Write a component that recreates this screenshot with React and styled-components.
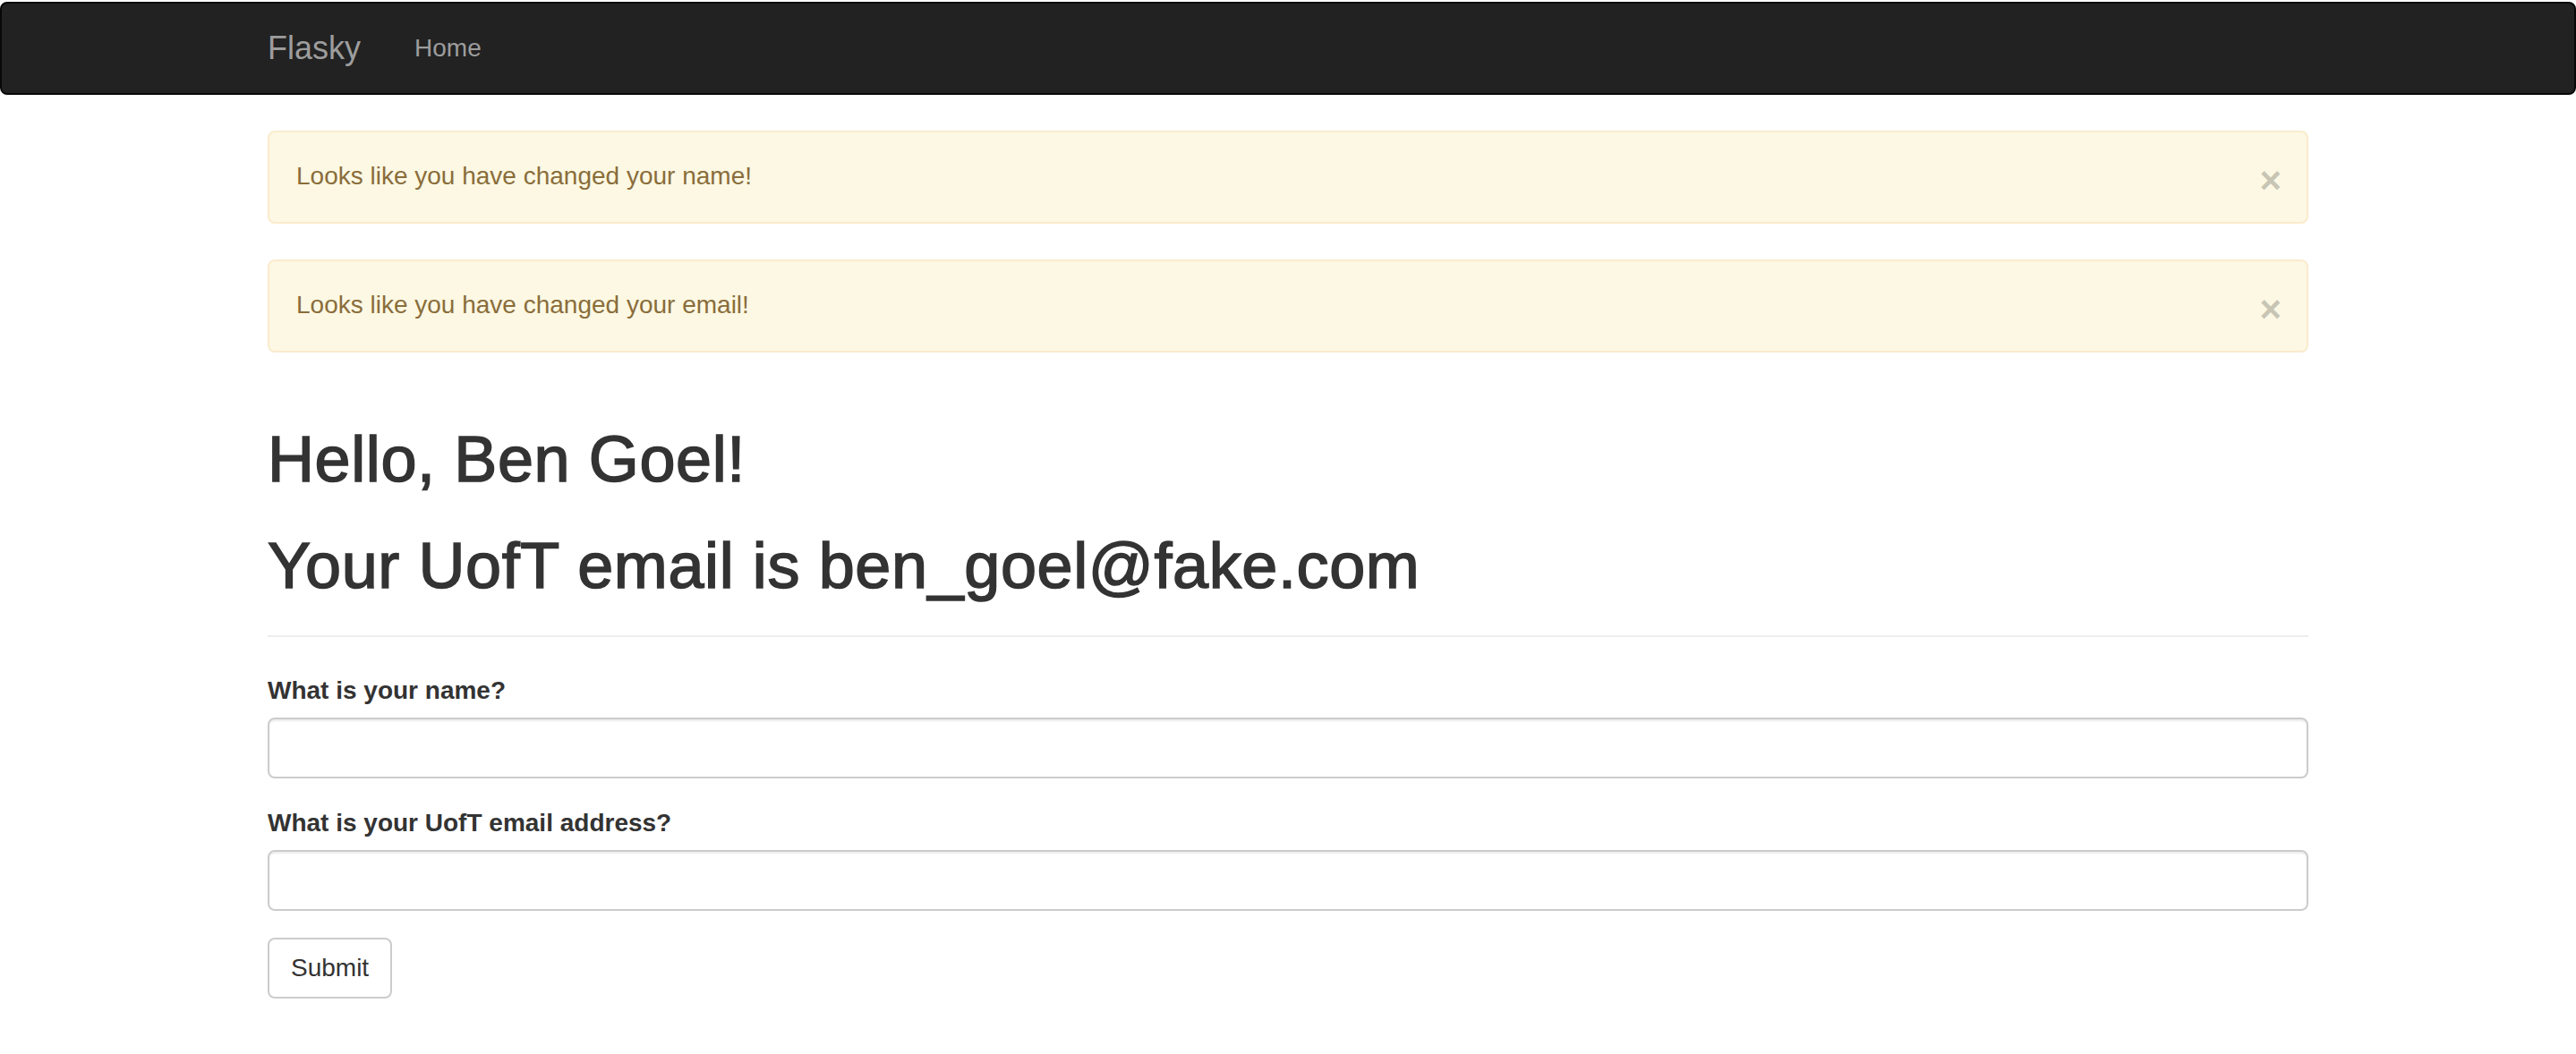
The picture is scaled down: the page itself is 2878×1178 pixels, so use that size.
import React from "react";
import styled, { createGlobalStyle } from "styled-components";

const Global = createGlobalStyle`
  * { box-sizing: border-box; }
  html, body { margin: 0; padding: 0; background: #fff; }
  body {
    font-family: "Liberation Sans", Arial, Helvetica, sans-serif;
    font-size: 28px;
    line-height: 40px;
    color: #333;
  }
`;

const Navbar = styled.nav`
  margin-top: 2px;
  min-height: 100px;
  background: #222;
  border: 2px solid #080808;
  border-radius: 8px;
  margin-bottom: 40px;
`;

const Container = styled.div`
  width: 2340px;
  margin: 0 auto;
  padding: 0 30px;
`;

const NavInner = styled.div`
  display: flex;
  align-items: center;
`;

const Brand = styled.a`
  display: block;
  height: 100px;
  padding: 30px;
  margin-left: -30px;
  font-size: 36px;
  line-height: 40px;
  color: #9d9d9d;
  text-decoration: none;
`;

const NavLink = styled.a`
  display: block;
  padding: 30px;
  font-size: 28px;
  line-height: 40px;
  color: #9d9d9d;
  text-decoration: none;
`;

const Alert = styled.div`
  padding: 29px 70px 29px 30px;
  margin-bottom: 40px;
  border: 2px solid #faebcc;
  border-radius: 8px;
  background: #fcf8e3;
  color: #8a6d3b;
  &::after { content: ""; display: table; clear: both; }
`;

const Close = styled.button`
  float: right;
  position: relative;
  top: 4px;
  right: -42px;
  padding: 0;
  border: 0;
  background: transparent;
  font-family: "Liberation Sans", Arial, sans-serif;
  font-size: 42px;
  font-weight: bold;
  line-height: 1;
  color: #000;
  opacity: 0.2;
  text-shadow: 0 2px 0 #fff;
  cursor: pointer;
`;

const PageHeader = styled.div`
  margin: 80px 0 40px;
  padding-bottom: 18px;
  border-bottom: 2px solid #eee;
`;

const Heading = styled.h1`
  font-size: 72px;
  line-height: 1.1;
  font-weight: 500;
  letter-spacing: 0.6px;
  margin: 40px 0 20px;
  color: #333;
  -webkit-text-stroke: 1.6px #333;
  &:first-child { margin-top: 0; }
`;

const Form = styled.form`
  display: flex;
  flex-direction: column;
  align-items: flex-start;
`;

const FormGroup = styled.div`
  width: 100%;
  margin-bottom: 30px;
`;

const Label = styled.label`
  display: inline-block;
  margin-bottom: 10px;
  font-weight: bold;
  line-height: 40px;
`;

const Input = styled.input`
  display: block;
  width: 100%;
  height: 68px;
  padding: 12px 24px;
  font-family: inherit;
  font-size: 28px;
  line-height: 40px;
  color: #555;
  background: #fff;
  border: 2px solid #ccc;
  border-radius: 8px;
  box-shadow: inset 0 2px 2px rgba(0, 0, 0, 0.075);
  outline: none;
`;

const Button = styled.button`
  padding: 12px 24px;
  font-family: inherit;
  font-size: 28px;
  line-height: 40px;
  color: #333;
  background: #fff;
  border: 2px solid #ccc;
  border-radius: 8px;
  cursor: pointer;
`;

const alerts = [
  "Looks like you have changed your name!",
  "Looks like you have changed your email!",
];

export default function App() {
  return (
    <>
      <Global />
      <Navbar>
        <Container>
          <NavInner>
            <Brand href="#">Flasky</Brand>
            <NavLink href="#">Home</NavLink>
          </NavInner>
        </Container>
      </Navbar>
      <Container>
        {alerts.map((a) => (
          <Alert key={a}>
            <Close type="button">×</Close>
            {a}
          </Alert>
        ))}
        <PageHeader>
          <Heading>Hello, Ben Goel!</Heading>
          <Heading>Your UofT email is ben_goel@fake.com</Heading>
        </PageHeader>
        <Form onSubmit={(e) => e.preventDefault()}>
          <FormGroup>
            <Label htmlFor="name">What is your name?</Label>
            <Input id="name" type="text" />
          </FormGroup>
          <FormGroup>
            <Label htmlFor="email">What is your UofT email address?</Label>
            <Input id="email" type="text" />
          </FormGroup>
          <Button type="submit">Submit</Button>
        </Form>
      </Container>
    </>
  );
}
